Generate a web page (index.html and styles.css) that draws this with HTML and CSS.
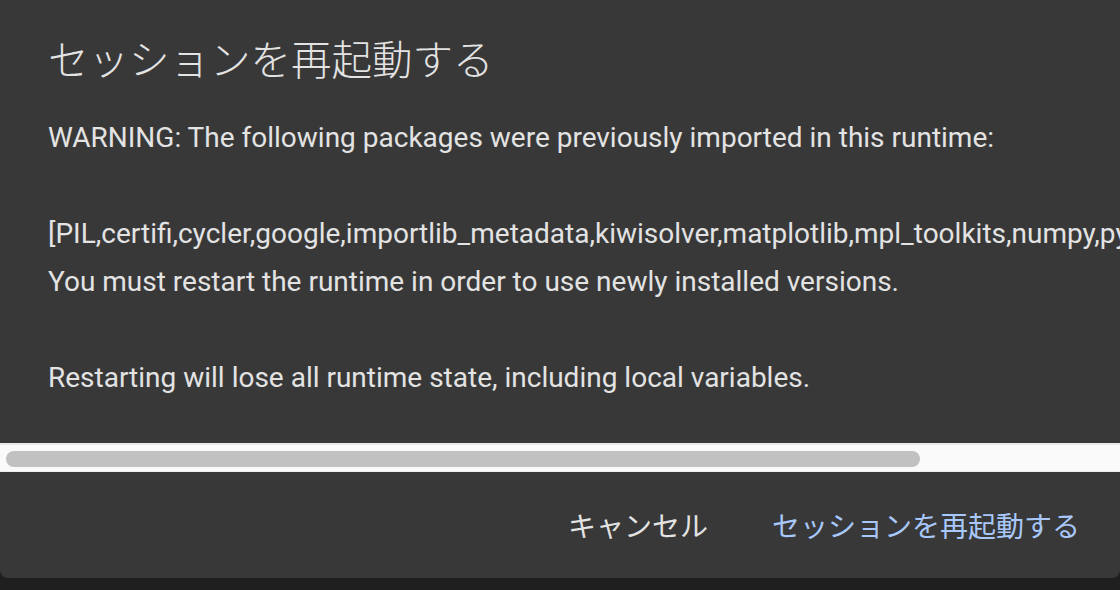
FILE: index.html
```html
<!DOCTYPE html>
<html lang="ja">
<head>
    <meta charset="UTF-8">
    <meta name="viewport" content="width=device-width, initial-scale=1.0">
    <title>セッションを再起動する</title>
    <link rel="stylesheet" href="styles.css">
</head>
<body>
    <div class="dialog">
        <h2 class="title">セッションを再起動する</h2>
        <div class="content">
            <pre class="message">WARNING: The following packages were previously imported in this runtime:

[PIL,certifi,cycler,google,importlib_metadata,kiwisolver,matplotlib,mpl_toolkits,numpy,pyparsing,six]
You must restart the runtime in order to use newly installed versions.

Restarting will lose all runtime state, including local variables.</pre>
        </div>
        <div class="scrollbar">
            <div class="thumb"></div>
        </div>
        <div class="actions">
            <button class="btn">キャンセル</button>
            <button class="btn primary">セッションを再起動する</button>
        </div>
    </div>
</body>
</html>
```

FILE: styles.css
```css
* {
    margin: 0;
    padding: 0;
    box-sizing: border-box;
}

body {
    background: #1f1f1f;
    font-family: Roboto, "Noto Sans CJK JP", sans-serif;
    overflow: hidden;
}

.dialog {
    width: 1120px;
    height: 578px;
    background: #383838;
    border-radius: 0 0 8px 8px;
    display: flex;
    flex-direction: column;
}

.title {
    padding: 30px 48px 0;
    font-family: "Noto Sans CJK JP", sans-serif;
    font-size: 40.5px;
    font-weight: 300;
    line-height: 56px;
    color: #e3e3e3;
}

.content {
    padding: 28px 48px 41px;
    overflow: hidden;
}

.message {
    font-family: Roboto, "Noto Sans CJK JP", sans-serif;
    font-size: 28px;
    line-height: 48px;
    color: #e3e3e3;
    white-space: pre;
}

.scrollbar {
    height: 29px;
    padding: 6px;
    background: #fafafa;
    border-top: 2px solid #e8e8e8;
    border-bottom: 1px solid #ededed;
}

.thumb {
    width: 914px;
    height: 16px;
    border-radius: 8px;
    background: #c1c1c1;
}

.actions {
    flex: 1;
    display: flex;
    justify-content: flex-end;
    align-items: center;
    gap: 32px;
    padding: 0 24px 0 0;
}

.btn {
    background: none;
    border: none;
    padding: 8px 16px;
    font-family: "Noto Sans CJK JP", sans-serif;
    font-size: 28px;
    color: #e3e3e3;
    cursor: pointer;
}

.primary {
    color: #a8c7fa;
}
```
